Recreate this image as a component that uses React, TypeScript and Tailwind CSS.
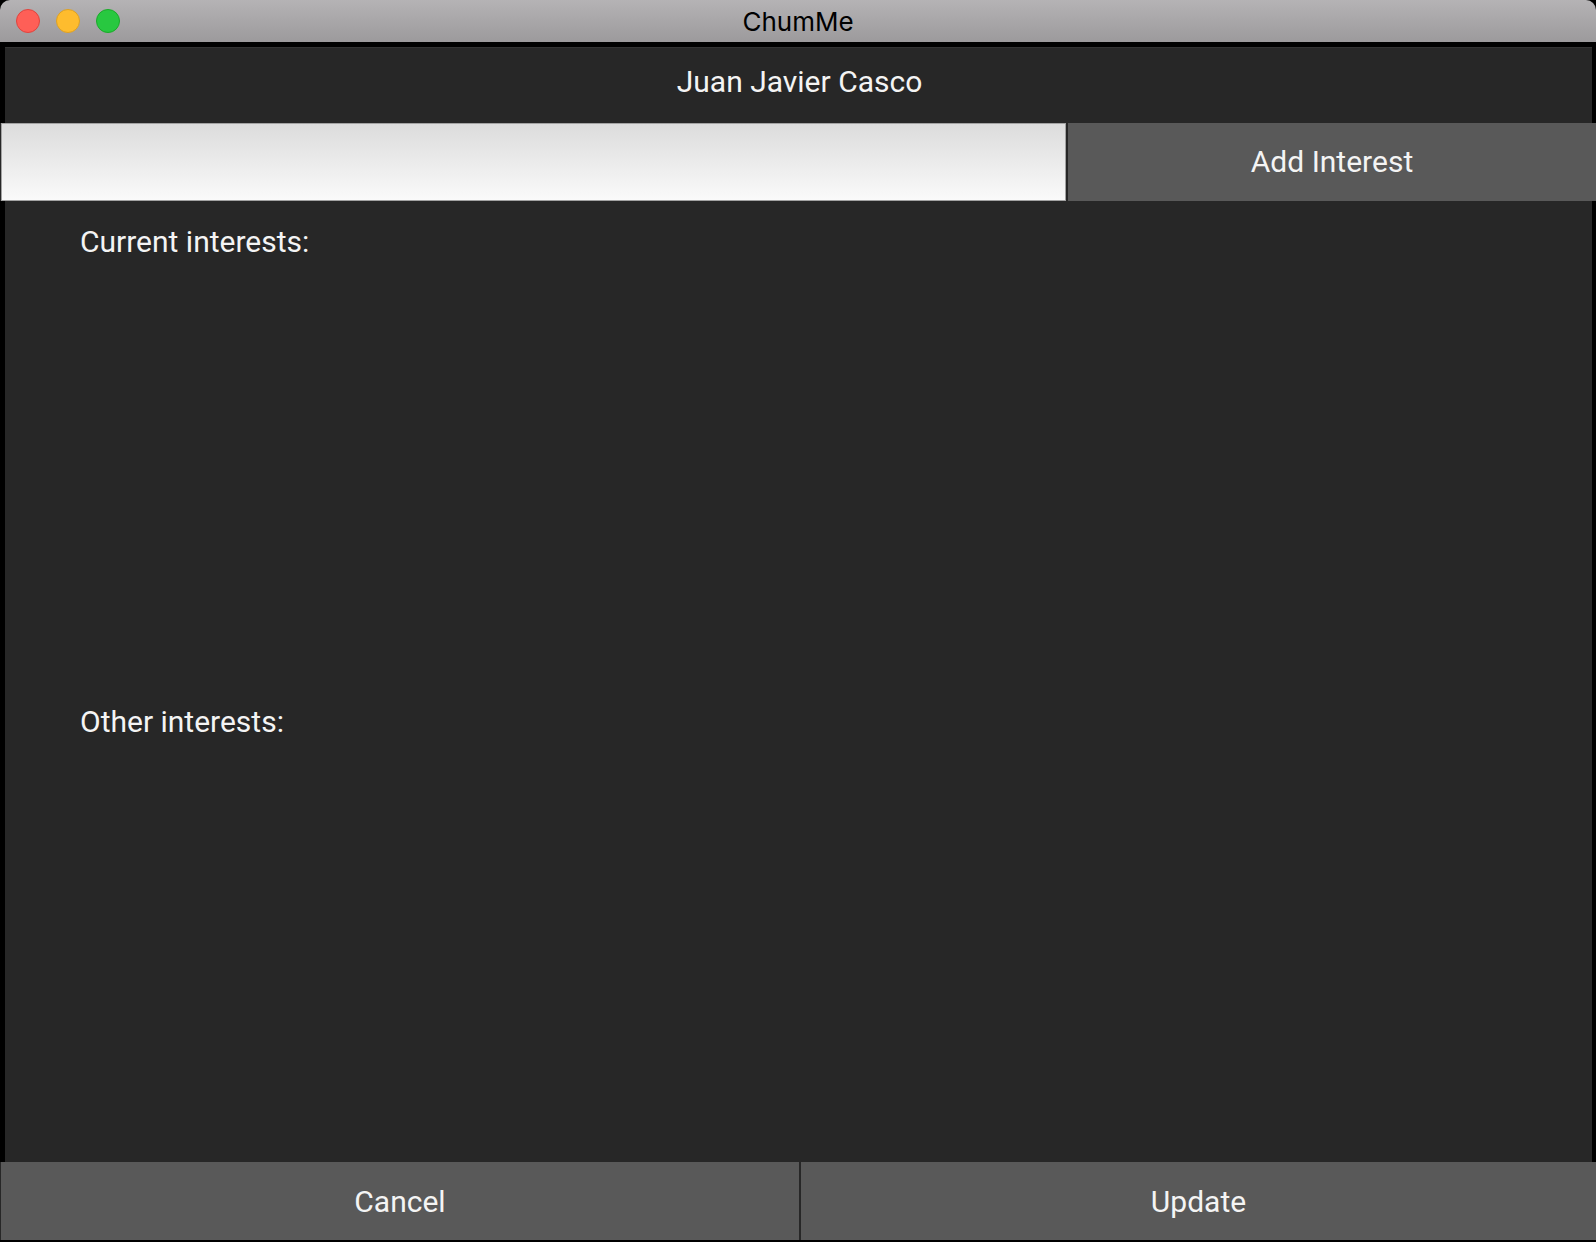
const roboto = { fontFamily: 'Roboto, "Noto Sans", sans-serif' }

function TrafficLights() {
  return (
    <div className="flex items-center gap-4 pl-4">
      <span className="h-6 w-6 rounded-full border border-[#e0443e] bg-[#fe5f57]" />
      <span className="h-6 w-6 rounded-full border border-[#dea123] bg-[#febc2e]" />
      <span className="h-6 w-6 rounded-full border border-[#1aab29] bg-[#28c840]" />
    </div>
  )
}

export default function App() {
  return (
    <div className="flex h-[1242px] w-[1596px] flex-col overflow-hidden bg-black">
      {/* Window title bar */}
      <div className="grid h-[42px] shrink-0 grid-cols-[1fr_auto_1fr] items-center rounded-t-[10px] bg-gradient-to-b from-[#b5b3b5] to-[#9c9a9c]">
        <TrafficLights />
        <div className="pt-[1px] text-[26px] leading-none text-black" style={{ fontFamily: 'Inter, "Liberation Sans", sans-serif' }}>
          ChumMe
        </div>
        <div />
      </div>

      <div className="h-[5px] shrink-0 bg-black" />

      {/* App content */}
      <div className="flex flex-1 flex-col text-[30px] text-[#f4f4f4]" style={roboto}>
        <div className="ml-[5px] mr-[4px] flex h-[76px] shrink-0 justify-center border-t border-[#333] bg-[#272727] pl-[2px] pt-[16px] leading-[36px]">
          Juan Javier Casco
        </div>

        <div className="flex h-[78px] shrink-0 gap-[2px] bg-[#272727] pl-[1px]">
          <input
            className="h-full w-[1065px] border border-[#a3a3a3] bg-gradient-to-b from-[#dcdcdc] to-[#fafafa] px-3 text-[30px] text-[#222] outline-none"
            style={roboto}
          />
          <button className="flex flex-1 items-center justify-center bg-[#595959] leading-[36px] text-[#f4f4f4]">
            Add Interest
          </button>
        </div>

        <div className="ml-[5px] mr-[4px] grid flex-1 grid-rows-2 bg-[#272727] leading-[36px]">
          <div className="pl-[75px] pt-[23px]">Current interests:</div>
          <div className="pl-[75px] pt-[22px]">Other interests:</div>
        </div>

        <div className="flex h-[78px] shrink-0 gap-[2px] bg-[#272727] pl-[1px]">
          <button className="flex w-[798px] items-center justify-center bg-[#595959] pt-[2px] leading-[36px]">
            Cancel
          </button>
          <button className="flex flex-1 items-center justify-center bg-[#595959] pt-[2px] leading-[36px]">
            Update
          </button>
        </div>
      </div>

      <div className="h-[2px] shrink-0 bg-black" />
    </div>
  )
}
